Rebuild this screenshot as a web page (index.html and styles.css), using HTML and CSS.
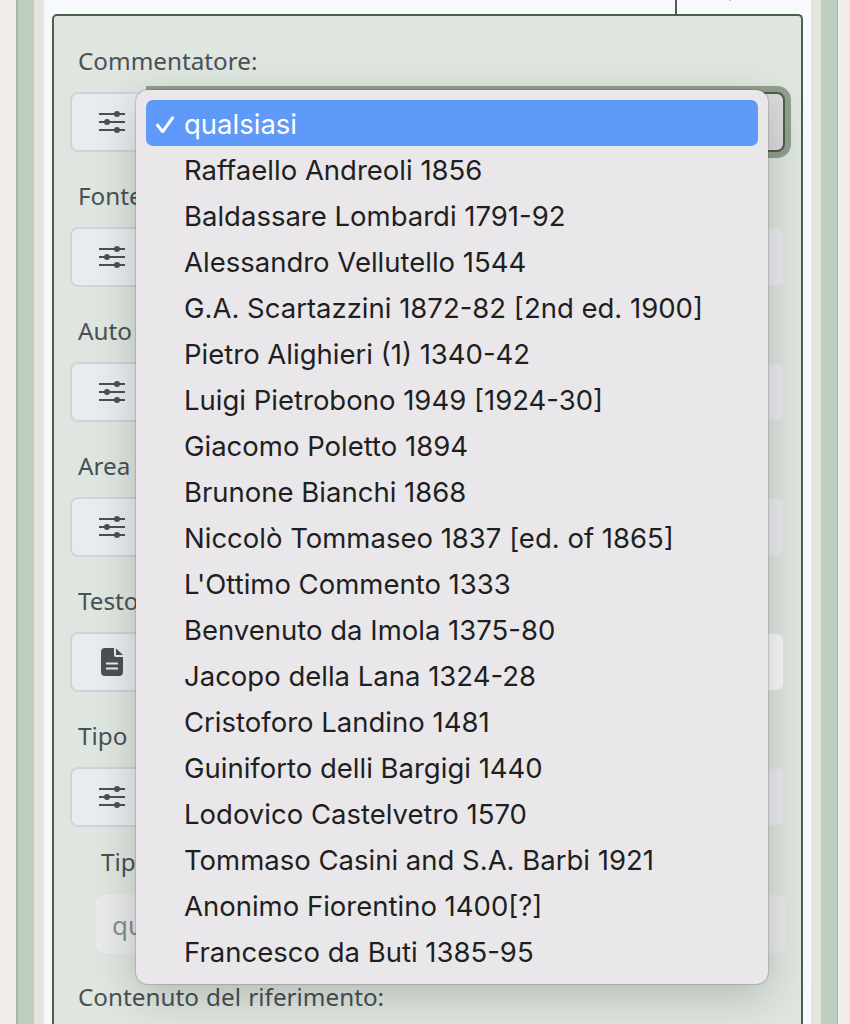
FILE: index.html
```html
<!DOCTYPE html>
<html lang="it">
<head>
<meta charset="utf-8">
<title>Ricerca</title>
<link rel="stylesheet" href="styles.css">
</head>
<body>
<svg class="defs" width="0" height="0" aria-hidden="true">
  <symbol id="sliders" viewBox="0 0 26 22">
    <path d="M0 3h26M0 11h26M0 19h26" stroke="currentColor" stroke-width="2" fill="none"/>
    <circle cx="18" cy="3" r="3" fill="currentColor"/>
    <circle cx="8" cy="11" r="3" fill="currentColor"/>
    <circle cx="18" cy="19" r="3" fill="currentColor"/>
  </symbol>
  <symbol id="doc" viewBox="0 0 22 28">
    <path fill="currentColor" fill-rule="evenodd" d="M4 0h9v7a2 2 0 0 0 2 2h7v15a4 4 0 0 1-4 4H4a4 4 0 0 1-4-4V4a4 4 0 0 1 4-4zM5 14.500v2h12v-2zM5 19.500v2h12v-2z"/>
    <path fill="currentColor" d="M15 0.500L22 7h-7z"/>
  </symbol>
</svg>
<div class="page">
  <div class="band-green">
    <div class="band-grey">
      <div class="band-white">
        <div class="tabs"><div class="tab"><span class="tab-dot"></span></div></div>
        <form class="panel">
          <div class="field">
            <div class="label">Commentatore:</div>
            <div class="group">
              <span class="addon"><svg class="ico-sliders"><use href="#sliders"/></svg></span>
              <span class="control focused"></span>
            </div>
          </div>
          <div class="field">
            <div class="label">Fonte</div>
            <div class="group">
              <span class="addon"><svg class="ico-sliders"><use href="#sliders"/></svg></span>
              <span class="control"></span>
            </div>
          </div>
          <div class="field">
            <div class="label">Auto</div>
            <div class="group">
              <span class="addon"><svg class="ico-sliders"><use href="#sliders"/></svg></span>
              <span class="control"></span>
            </div>
          </div>
          <div class="field">
            <div class="label">Area</div>
            <div class="group">
              <span class="addon"><svg class="ico-sliders"><use href="#sliders"/></svg></span>
              <span class="control"></span>
            </div>
          </div>
          <div class="field">
            <div class="label">Testo</div>
            <div class="group">
              <span class="addon"><svg class="ico-doc"><use href="#doc"/></svg></span>
              <span class="control white"></span>
            </div>
          </div>
          <div class="field">
            <div class="label">Tipo</div>
            <div class="group">
              <span class="addon"><svg class="ico-sliders"><use href="#sliders"/></svg></span>
              <span class="control"></span>
            </div>
          </div>
          <div class="subfield">
            <div class="label sublabel">Tip</div>
            <div class="subinput">qu</div>
          </div>
          <div class="label">Contenuto del riferimento:</div>
        </form>
      </div>
    </div>
  </div>
  <ul class="menu">
    <li class="item selected"><svg class="check" viewBox="0 0 20 18"><path d="M1.700 9.300L7.700 16.700L18.300 1.800" fill="none" stroke="currentColor" stroke-width="3"/></svg>qualsiasi</li>
    <li class="item">Raffaello Andreoli 1856</li>
    <li class="item">Baldassare Lombardi 1791-92</li>
    <li class="item">Alessandro Vellutello 1544</li>
    <li class="item">G.A. Scartazzini 1872-82 [2nd ed. 1900]</li>
    <li class="item">Pietro Alighieri (1) 1340-42</li>
    <li class="item">Luigi Pietrobono 1949 [1924-30]</li>
    <li class="item">Giacomo Poletto 1894</li>
    <li class="item">Brunone Bianchi 1868</li>
    <li class="item">Niccolò Tommaseo 1837 [ed. of 1865]</li>
    <li class="item">L'Ottimo Commento 1333</li>
    <li class="item">Benvenuto da Imola 1375-80</li>
    <li class="item">Jacopo della Lana 1324-28</li>
    <li class="item">Cristoforo Landino 1481</li>
    <li class="item">Guiniforto delli Bargigi 1440</li>
    <li class="item">Lodovico Castelvetro 1570</li>
    <li class="item">Tommaso Casini and S.A. Barbi 1921</li>
    <li class="item">Anonimo Fiorentino 1400[?]</li>
    <li class="item">Francesco da Buti 1385-95</li>
  </ul>
</div>
</body>
</html>
```

FILE: styles.css
```css
* { box-sizing: border-box; }
html, body { margin: 0; height: 1024px; overflow: hidden; }
body { background: #f0ede8; font-family: "Noto Sans", sans-serif; }
.defs { position: absolute; }

.page { position: relative; height: 1024px; padding: 0 12px 0 16px; }
.band-green { height: 100%; padding: 0 16px; background: #bdcdbf; border-left: 2px solid #a6b6a8; border-right: 1px solid #a6b6a8; }
.band-grey { height: 100%; padding: 0 10px; background: #e4e5df; }
.band-white { height: 100%; padding: 0 8px; background: #f8f9fc; }

.tabs { display: flex; justify-content: flex-end; height: 14px; }
.tab { position: relative; width: 128px; border-left: 2px solid #4a6149; }
.tab-dot { position: absolute; top: 0; left: 52px; width: 2px; height: 1px; background: #c4c6c8; }

.panel { height: 1010px; padding: 28px 16px 0; background: #dfe6df; border: 2px solid #4a6149; border-bottom: 0; border-radius: 5px 5px 0 0; }

.label { height: 36px; line-height: 34px; padding-left: 8px; font-size: 24.250px; word-spacing: 1px; color: #495057; }
.field { margin-bottom: 27px; }
.field .label { margin-bottom: 12px; }

.group { display: flex; height: 60px; }
.addon { display: flex; align-items: center; justify-content: center; flex: none; width: 84px; background: #e9ecef; border: 2px solid #ced4da; border-radius: 8px 0 0 8px; color: #495057; }
.control { flex: 1; margin-left: -2px; background: #e9ebee; border: 2px solid #e2e6e3; border-left: 0; border-radius: 0 8px 8px 0; }
.control.white { background: #f7f8fa; }
.control.focused { background: #dcdcdf; border: 2px solid #4a6149; box-shadow: 0 0 0 6px #929f8f; }

.ico-sliders { width: 26px; height: 22px; }
.ico-doc { width: 22px; height: 28px; }

.subfield { padding-left: 26px; margin-top: -10px; margin-bottom: 27px; }
.sublabel { padding-left: 5px; margin-bottom: 15px; line-height: 36px; }
.subinput { height: 58px; line-height: 60px; padding-left: 16px; font-size: 26px; color: #868e96; background: #e9ebea; border-radius: 8px; }

.menu { position: absolute; top: 90px; left: 136px; width: 632px; margin: 0; padding: 10px; list-style: none; background: #e9e7ea; border-radius: 12px; box-shadow: 0 0 1px 1px rgba(70, 70, 70, .22), 0 12px 44px rgba(0, 0, 0, .2); font-family: Inter, sans-serif; font-size: 27.500px; color: #1f1f1f; }
.item { position: relative; height: 46px; line-height: 49px; padding-left: 38px; border-radius: 7px; white-space: nowrap; }
.item.selected { background: #5f99f9; color: #fff; }
.check { position: absolute; left: 9px; top: 15px; width: 20px; height: 18px; }
```
